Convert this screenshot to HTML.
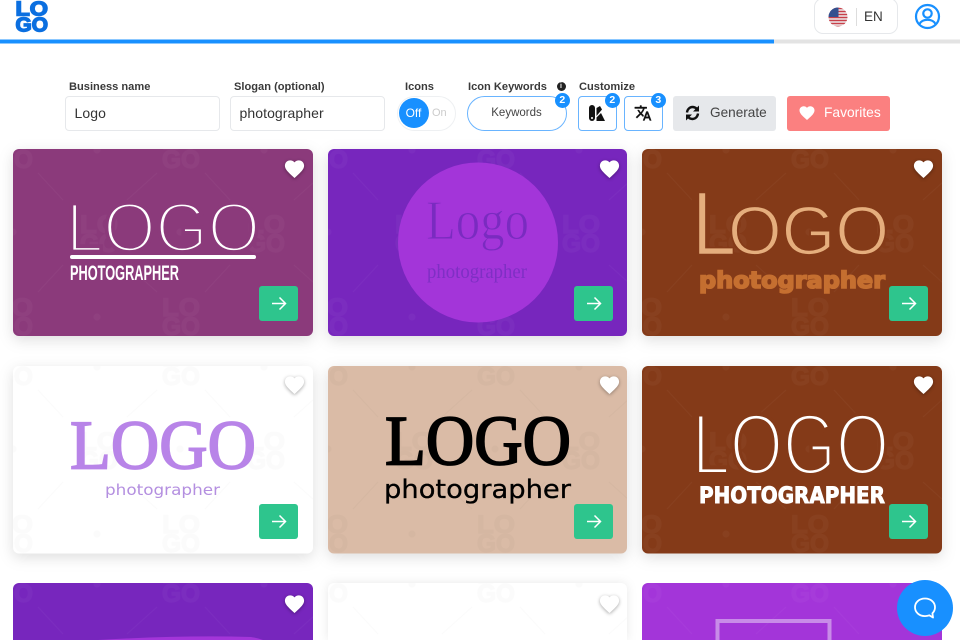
<!DOCTYPE html>
<html lang="en"><head><meta charset="utf-8"><title>Logo maker</title>
<style>
html,body{margin:0;padding:0;background:#fff;overflow:hidden}
body{width:960px;height:640px;overflow:hidden;position:relative;font-family:"Liberation Sans",sans-serif;color:#333}
.a{position:absolute;box-sizing:border-box}
.lb{font-size:11.1px;font-weight:bold;color:#3a3a3a;top:80px;line-height:14px;white-space:nowrap}
.in{top:95.5px;height:35px;border:1.7px solid #e6e8eb;border-radius:4px;font-size:14px;line-height:32px;padding-left:8.5px;color:#333;background:#fff;letter-spacing:.08px}
.bd{width:15.5px;height:15.5px;border-radius:50%;background:#1890ff;color:#fff;font-size:10.5px;font-weight:bold;text-align:center;line-height:15.5px;top:92.5px}
.cb{top:96px;height:34.5px;width:39px;border:1.5px solid #69b4ff;border-radius:4px;background:#fff}
svg{display:block}
</style></head><body>
<svg class="a" style="left:0;top:0" width="960" height="640" viewBox="0 0 960 640">
<defs>
<g id="tile">
  <text x="0" y="18" font-family="Liberation Sans" font-weight="bold" font-size="25" stroke-width="1.2" textLength="38" lengthAdjust="spacingAndGlyphs">LO</text>
  <text x="0" y="37" font-family="Liberation Sans" font-weight="bold" font-size="25" stroke-width="1.2" textLength="38" lengthAdjust="spacingAndGlyphs">GO</text>
</g>
<g id="tileset">
  <use href="#tile" x="67" y="66"/><use href="#tile" x="149" y="-18"/><use href="#tile" x="-18" y="-18"/><use href="#tile" x="149" y="149"/><use href="#tile" x="-18" y="149"/>
  <circle cx="84" cy="1" r="3"/><circle cx="84" cy="168" r="3"/><circle cx="167" cy="83" r="3"/><circle cx="0" cy="83" r="3"/>
  <path d="M25 24L50 51M114 51L144 24M50 116L25 143M114 116L144 143" fill="none" stroke-width="1"/>
</g>
<pattern id="wl" width="167" height="167" patternUnits="userSpaceOnUse"><use href="#tileset" fill="#fff" stroke="#fff" opacity=".03"/></pattern>
<pattern id="wd" width="167" height="167" patternUnits="userSpaceOnUse"><use href="#tileset" fill="#000" stroke="#000" opacity=".025"/></pattern>
<pattern id="wb" width="167" height="167" patternUnits="userSpaceOnUse"><use href="#tileset" fill="#000" stroke="#000" opacity=".016"/></pattern>
<g id="go">
  <rect x="246" y="137" width="39" height="35" rx="3" fill="#2ec58d"/>
  <path d="M259 154.500H272.500M266.500 148.500L272.500 154.500L266.500 160.500" fill="none" stroke="#fff" stroke-width="1.5"/>
</g>
<path id="hp" d="M12 21.350l-1.450-1.320C5.400 15.360 2 12.280 2 8.500 2 5.420 4.420 3 7.500 3c1.740 0 3.410.81 4.500 2.090C13.090 3.810 14.760 3 16.500 3 19.580 3 22 5.420 22 8.500c0 3.780-3.400 6.860-8.550 11.540L12 21.350z"/>
<g id="ht"><use href="#hp" transform="translate(281.500 20) scale(.96) translate(-12 -12)" fill="#fff" style="filter:drop-shadow(0 1px 2px rgba(0,0,0,.35))"/></g>
</defs>

<rect x="0" y="39.500" width="960" height="4" fill="#e3e3e3"/>
<rect x="0" y="39.500" width="774" height="4" fill="#1890ff"/>
<g font-family="Liberation Sans" font-weight="bold" font-size="20" fill="#0b6fe0" stroke="#0b6fe0" stroke-width="1.400">
<text x="15.500" y="15.300" textLength="32.500" lengthAdjust="spacingAndGlyphs">LO</text>
<text x="15.500" y="31.300" textLength="32.500" lengthAdjust="spacingAndGlyphs">GO</text>
</g>

<!-- Card 1 -->
<g transform="translate(13 149)">
<rect width="300" height="187" rx="6" fill="#8b3a7b" style="filter:drop-shadow(0 4px 7px rgba(0,0,0,.13))"/>
<rect width="300" height="187" rx="6" fill="url(#wl)"/>
<text x="53" y="102.500" font-family="Liberation Sans" font-size="70" fill="#fff" stroke="#8b3a7b" stroke-width="3.800" textLength="194" lengthAdjust="spacingAndGlyphs">LOGO</text>
<rect x="57" y="106" width="186" height="4" rx="2" fill="#fff"/>
<text x="57" y="131" font-family="Liberation Sans" font-weight="bold" font-size="21" fill="#fff" textLength="109" lengthAdjust="spacingAndGlyphs">PHOTOGRAPHER</text>
<use href="#go"/><use href="#ht"/>
</g>
<!-- Card 2 -->
<g transform="translate(328 149)">
<rect width="299" height="187" rx="6" fill="#7726bd" style="filter:drop-shadow(0 4px 7px rgba(0,0,0,.13))"/>
<rect width="299" height="187" rx="6" fill="url(#wl)"/>
<circle cx="150" cy="93.500" r="80" fill="#a335d9"/>
<text x="98" y="90" font-family="Liberation Serif" font-size="56" fill="#7a2bc0" stroke="#a335d9" stroke-width="1" textLength="103" lengthAdjust="spacingAndGlyphs">Logo</text>
<text x="99" y="129" font-family="Liberation Serif" font-size="20" fill="#7f2fc4" textLength="100" lengthAdjust="spacingAndGlyphs">photographer</text>
<use href="#go"/><use href="#ht"/>
</g>
<!-- Card 3 -->
<g transform="translate(642 149)">
<rect width="300" height="187" rx="6" fill="#843a18" style="filter:drop-shadow(0 4px 7px rgba(0,0,0,.13))"/>
<rect width="300" height="187" rx="6" fill="url(#wl)"/>
<text x="50" y="105.500" font-family="Liberation Sans" font-size="90" fill="#e5ae7d" stroke="#843a18" stroke-width="1.600" textLength="44" lengthAdjust="spacingAndGlyphs">L</text>
<text x="86" y="105.500" font-family="Liberation Sans" font-size="69" fill="#e5ae7d" stroke="#843a18" stroke-width="1.800" textLength="161" lengthAdjust="spacingAndGlyphs">OGO</text>
<text x="57" y="139" font-family="DejaVu Sans" font-weight="bold" font-size="23" fill="#c56f30" stroke="#c56f30" stroke-width="1.600" textLength="186" lengthAdjust="spacingAndGlyphs">photographer</text>
<use href="#go" x="1"/><use href="#ht"/>
</g>
<!-- Card 4 -->
<g transform="translate(13 366)">
<rect width="300" height="187.500" rx="6" fill="#fff" style="filter:drop-shadow(0 4px 7px rgba(0,0,0,.13))"/>
<rect width="300" height="187.500" rx="6" fill="url(#wb)"/>
<text x="57" y="102.500" font-family="Liberation Serif" font-size="70" fill="#b884e8" stroke="#b884e8" stroke-width="1.700" textLength="186" lengthAdjust="spacingAndGlyphs">LOGO</text>
<text x="92" y="129" font-family="DejaVu Sans" font-size="15" fill="#b48fe0" textLength="115" lengthAdjust="spacingAndGlyphs">photographer</text>
<use href="#go" y="1"/><use href="#ht" y="-1"/>
</g>
<!-- Card 5 -->
<g transform="translate(328 366)">
<rect width="299" height="187.500" rx="6" fill="#dabba6" style="filter:drop-shadow(0 4px 7px rgba(0,0,0,.13))"/>
<rect width="299" height="187.500" rx="6" fill="url(#wd)"/>
<text x="57" y="98.500" font-family="Liberation Serif" font-size="71" fill="#000" stroke="#000" stroke-width="1.800" textLength="186" lengthAdjust="spacingAndGlyphs">LOGO</text>
<text x="56" y="132" font-family="DejaVu Sans" font-size="26" fill="#000" stroke="#000" stroke-width=".3" textLength="187" lengthAdjust="spacingAndGlyphs">photographer</text>
<use href="#go" y="1"/><use href="#ht" y="-1"/>
</g>
<!-- Card 6 -->
<g transform="translate(642 366)">
<rect width="300" height="187.500" rx="6" fill="#843a18" style="filter:drop-shadow(0 4px 7px rgba(0,0,0,.13))"/>
<rect width="300" height="187.500" rx="6" fill="url(#wl)"/>
<text x="50" y="108" font-family="Liberation Sans" font-size="86" fill="#fff" stroke="#843a18" stroke-width="4" textLength="197" lengthAdjust="spacingAndGlyphs">LOGO</text>
<text x="57" y="137" font-family="DejaVu Sans" font-weight="bold" font-size="22" fill="#fff" stroke="#fff" stroke-width=".9" textLength="186" lengthAdjust="spacingAndGlyphs">PHOTOGRAPHER</text>
<use href="#go" x="1" y="1"/><use href="#ht" y="-1"/>
</g>
<!-- Row 3 -->
<g transform="translate(13 583)">
<path d="M0 57V6A6 6 0 0 1 6 0H294A6 6 0 0 1 300 6V57Z" fill="#7726bd"/>
<path d="M0 57V6A6 6 0 0 1 6 0H294A6 6 0 0 1 300 6V57Z" fill="url(#wl)"/>
<path d="M85 57Q170 52 238 54Q245 55 250 57Z" fill="#a335d9"/>
<use href="#ht" y="1"/>
</g>
<g transform="translate(328 583)">
<path d="M0 57V6A6 6 0 0 1 6 0H293A6 6 0 0 1 299 6V57Z" fill="#fff" style="filter:drop-shadow(0 0 5px rgba(0,0,0,.09))"/>
<path d="M0 57V6A6 6 0 0 1 6 0H293A6 6 0 0 1 299 6V57Z" fill="url(#wb)"/>
<use href="#ht" y="1"/>
</g>
<g transform="translate(642 583)">
<path d="M0 57V6A6 6 0 0 1 6 0H294A6 6 0 0 1 300 6V57Z" fill="#a335d9"/>
<path d="M0 57V6A6 6 0 0 1 6 0H294A6 6 0 0 1 300 6V57Z" fill="url(#wl)"/>
<path d="M75.500 57V38H187.500V57" fill="none" stroke="#c88be8" stroke-width="4"/>
</g>
<circle cx="925" cy="608" r="28" fill="#1890ff"/>
<path d="M925 598.500c-5.800 0-10 3.800-10 8.800s4.200 8.800 10 8.800c1.600 0 3-.3 4.300-.8l3.700 2.200-.6-4.200c1.600-1.500 2.600-3.600 2.600-6 0-5-4.200-8.800-10-8.800z" fill="none" stroke="#fff" stroke-width="1.800" stroke-linejoin="round"/>

<!-- user icon -->
<circle cx="927.500" cy="16.500" r="11.500" fill="none" stroke="#1890ff" stroke-width="2.200"/>
<circle cx="927.500" cy="13.500" r="4.200" fill="none" stroke="#1890ff" stroke-width="2.200"/>
<path d="M919.500 24c1.500-3 4.500-4.200 8-4.200s6.500 1.200 8 4.200" fill="none" stroke="#1890ff" stroke-width="2.200"/>
</svg>

<!-- language -->
<div class="a" style="left:813.500px;top:-2px;width:84px;height:36px;border:1.5px solid #e6e8eb;border-radius:9px"></div>
<svg class="a" style="left:828px;top:7px" width="20" height="20" viewBox="0 0 20 20">
<defs><clipPath id="fc"><circle cx="10" cy="10" r="9.500"/></clipPath></defs>
<g clip-path="url(#fc)"><rect width="20" height="20" fill="#eee"/>
<path d="M0 1.500H20M0 4.500H20M0 7.500H20M0 10.500H20M0 13.500H20M0 16.500H20M0 19.500H20" stroke="#c8404a" stroke-width="1.500"/>
<rect width="10.500" height="10" fill="#34508f"/></g>
</svg>
<div class="a" style="left:855.500px;top:8px;width:1.5px;height:18px;background:#ddd"></div>
<div class="a" style="left:864px;top:8.500px;font-size:13.500px;line-height:16px;color:#333">EN</div>

<!-- form -->
<div class="a lb" style="left:69px">Business name</div>
<div class="a in" style="left:65px;width:155px">Logo</div>
<div class="a lb" style="left:234px">Slogan (optional)</div>
<div class="a in" style="left:230px;width:155px">photographer</div>
<div class="a lb" style="left:405px">Icons</div>
<div class="a" style="left:397px;top:95.500px;width:59px;height:35px;border:1.5px solid #eef0f2;border-radius:18px;background:#fff"></div>
<div class="a" style="left:398.500px;top:98px;width:30px;height:30px;border-radius:50%;background:#1890ff;color:#fff;font-size:12px;line-height:30px;text-align:center">Off</div>
<div class="a" style="left:432px;top:106px;font-size:11px;line-height:14px;color:#ccc">On</div>
<div class="a lb" style="left:468px">Icon Keywords</div>
<div class="a" style="left:556.500px;top:81.500px;width:9px;height:9px;border-radius:50%;background:#222;color:#fff;font-size:7px;font-weight:bold;line-height:9px;text-align:center">i</div>
<div class="a" style="left:466.500px;top:96px;width:100px;height:34.500px;border:1.500px solid #69b4ff;border-radius:18px;font-size:11.500px;line-height:32.500px;text-align:center;color:#444;background:#fff">Keywords</div>
<div class="a bd" style="left:554.500px">2</div>
<div class="a lb" style="left:579px">Customize</div>
<div class="a cb" style="left:577.500px"></div>
<svg class="a" style="left:588px;top:105px" width="18" height="17" viewBox="0 0 18 17">
<rect x="1" y="0" width="6" height="16" rx="3" fill="#111"/>
<path d="M8.500 3L12 1L14 4.500L8.500 11Z" fill="#111"/>
<path d="M8.500 16V12.500L13 8L17 16Z" fill="#111"/>
<circle cx="4" cy="13" r="1" fill="#fff"/>
</svg>
<div class="a bd" style="left:604.500px">2</div>
<div class="a cb" style="left:623.500px"></div>
<svg class="a" style="left:634px;top:104px" width="18" height="18" viewBox="0 0 24 24"><path fill="#111" stroke="#111" stroke-width=".5" d="M12.870 15.070l-2.540-2.510.03-.03A17.520 17.520 0 0014.070 6H17V4h-7V2H8v2H1v2h11.170C11.500 7.920 10.440 9.750 9 11.350 8.070 10.320 7.300 9.190 6.690 8h-2c.73 1.630 1.730 3.170 2.980 4.560l-5.090 5.020L4 19l5-5 3.110 3.110.76-2.040zM18.500 10h-2L12 22h2l1.120-3h4.750L21 22h2l-4.500-12zm-2.620 7l1.620-4.330L19.120 17h-3.240z"/></svg>
<div class="a bd" style="left:650.500px">3</div>
<div class="a" style="left:673px;top:95.500px;width:103px;height:35px;background:#e6e8eb;border-radius:3px"></div>
<svg class="a" style="left:685px;top:105px" width="15" height="16" viewBox="0 0 15 16">
<path d="M2 7.500C2.300 4.300 4.700 2 7.500 2c1.700 0 3.200.7 4.300 1.900M13 8.500c-.3 3.200-2.700 5.500-5.500 5.500-1.700 0-3.200-.7-4.300-1.900" fill="none" stroke="#111" stroke-width="2.400"/>
<path d="M14 0.500V6.500H8ZM1 15.500V9.500H7Z" fill="#111"/>
</svg>
<div class="a" style="left:710px;top:105px;font-size:13.600px;line-height:16px;color:#444">Generate</div>
<div class="a" style="left:787px;top:95.500px;width:103px;height:35px;background:#fb8080;border-radius:3px"></div>
<svg class="a" style="left:798px;top:104px" width="18" height="18" viewBox="0 0 24 24"><use href="#hp" fill="#fff"/></svg>
<div class="a" style="left:824px;top:105px;font-size:13.800px;line-height:16px;color:#fff">Favorites</div>
</body></html>
